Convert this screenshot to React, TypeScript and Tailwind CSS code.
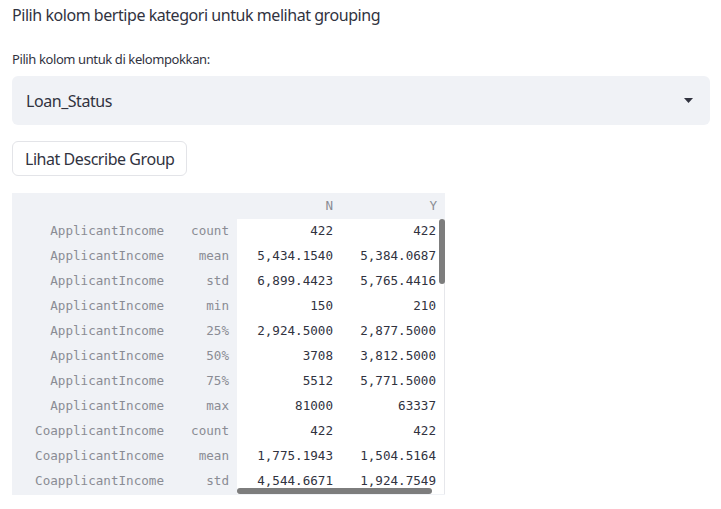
import React from "react";

const rows: [string, string, string, string][] = [
  ["ApplicantIncome", "count", "422", "422"],
  ["ApplicantIncome", "mean", "5,434.1540", "5,384.0687"],
  ["ApplicantIncome", "std", "6,899.4423", "5,765.4416"],
  ["ApplicantIncome", "min", "150", "210"],
  ["ApplicantIncome", "25%", "2,924.5000", "2,877.5000"],
  ["ApplicantIncome", "50%", "3708", "3,812.5000"],
  ["ApplicantIncome", "75%", "5512", "5,771.5000"],
  ["ApplicantIncome", "max", "81000", "63337"],
  ["CoapplicantIncome", "count", "422", "422"],
  ["CoapplicantIncome", "mean", "1,775.1943", "1,504.5164"],
  ["CoapplicantIncome", "std", "4,544.6671", "1,924.7549"],
];

const mono = { fontFamily: '"DejaVu Sans Mono", "Liberation Mono", monospace' };

export default function App() {
  return (
    <div
      className="w-[721px] h-[509px] bg-white text-[#31333f] px-3 overflow-hidden"
      style={{ fontFamily: '"Noto Sans", "Open Sans", sans-serif' }}
    >
      {/* heading */}
      <p className="pt-[3px] text-[16px] leading-[24px] tracking-[-0.45px]">
        Pilih kolom bertipe kategori untuk melihat grouping
      </p>

      {/* select */}
      <label className="block mt-[23px] text-[13px] leading-[18px] tracking-[-0.4px]">
        Pilih kolom untuk di kelompokkan:
      </label>
      <div className="mt-[8px] h-[49px] w-[698px] rounded-md bg-[#f0f2f6] flex items-center justify-between pl-[14px] pr-[17px]">
        <span className="text-[16px] tracking-[-0.45px]">Loan_Status</span>
        <svg width="9" height="5" viewBox="0 0 9 5">
          <path d="M0 0h9L4.5 5z" fill="#31333f" />
        </svg>
      </div>

      {/* button */}
      <button className="mt-[16px] h-[35px] px-[12px] rounded-md border border-[#e3e4e8] bg-white text-[16px] leading-none tracking-[-0.45px]">
        Lihat Describe Group
      </button>

      {/* dataframe */}
      <div className="relative mt-[17px] w-[433px] h-[302px] overflow-hidden bg-[#f0f2f6] text-[12.6px]" style={mono}>
        <div className="flex h-[26px] items-center text-[#8a8c94]">
          <div className="w-[160px]" />
          <div className="w-[65px]" />
          <div className="w-[104px] text-right pr-[8px]">N</div>
          <div className="w-[104px] text-right pr-[8px]">Y</div>
        </div>
        {rows.map((r, i) => (
          <div key={i} className="flex h-[25px] items-center">
            <div className="w-[160px] text-right pr-[8px] text-[#8a8c94]">{r[0]}</div>
            <div className="w-[65px] text-right pr-[8px] text-[#8a8c94]">{r[1]}</div>
            <div className="w-[104px] h-full flex items-center justify-end pr-[8px] bg-white">{r[2]}</div>
            <div className="w-[104px] h-full flex items-center justify-end pr-[8px] bg-white border-r border-[#e6e7eb]">{r[3]}</div>
          </div>
        ))}
        {/* scrollbars */}
        <div className="absolute left-[427px] top-[26px] w-[6px] h-[65px] rounded-full bg-[#7d7d7d]" />
        <div className="absolute left-[225px] top-[295px] w-[195px] h-[6px] rounded-full bg-[#7d7d7d]" />
      </div>
    </div>
  );
}
